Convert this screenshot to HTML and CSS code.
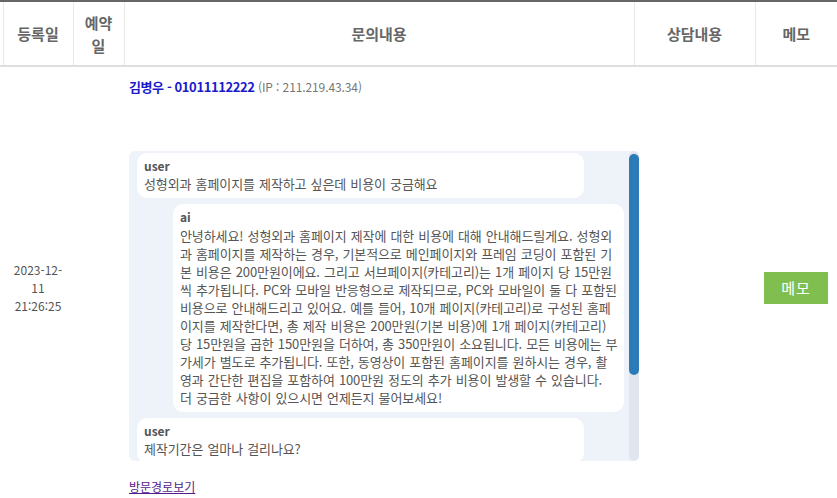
FILE: index.html
```html
<!DOCTYPE html>
<html lang="ko">
<head>
    <meta charset="UTF-8">
    <meta name="viewport" content="width=device-width, initial-scale=1.0">
    <title>상담 문의 목록</title>
    <link rel="stylesheet" href="styles.css">
</head>
<body>
    <table class="list">
        <colgroup>
            <col class="c-chk">
            <col class="c-date">
            <col class="c-resv">
            <col class="c-ask">
            <col class="c-answer">
            <col class="c-memo">
        </colgroup>
        <thead>
            <tr>
                <th></th>
                <th>등록일</th>
                <th>예약일</th>
                <th>문의내용</th>
                <th>상담내용</th>
                <th>메모</th>
            </tr>
        </thead>
        <tbody>
            <tr>
                <td></td>
                <td class="date">2023-12-<br>11<br>21:26:25</td>
                <td></td>
                <td class="ask">
                    <div class="info">
                        <span class="name">김병우 - 01011112222</span>
                        <span class="ip">(IP : 211.219.43.34)</span>
                    </div>

                    <div class="chat-wrap">
                        <div class="chat">
                            <div class="msg user">
                                <div class="who">user</div>
                                성형외과 홈페이지를 제작하고 싶은데 비용이 궁금해요
                            </div>
                            <div class="msg ai">
                                <div class="who">ai</div>
                                안녕하세요! 성형외과 홈페이지 제작에 대한 비용에 대해 안내해드릴게요. 성형외<br>과 홈페이지를 제작하는 경우, 기본적으로 메인페이지와 프레임 코딩이 포함된 기<br>본 비용은 200만원이에요. 그리고 서브페이지(카테고리)는 1개 페이지 당 15만원<br>씩 추가됩니다. PC와 모바일 반응형으로 제작되므로, PC와 모바일이 둘 다 포함된<br>비용으로 안내해드리고 있어요. 예를 들어, 10개 페이지(카테고리)로 구성된 홈페<br>이지를 제작한다면, 총 제작 비용은 200만원(기본 비용)에 1개 페이지(카테고리)<br>당 15만원을 곱한 150만원을 더하여, 총 350만원이 소요됩니다. 모든 비용에는 부<br>가세가 별도로 추가됩니다. 또한, 동영상이 포함된 홈페이지를 원하시는 경우, 촬<br>영과 간단한 편집을 포함하여 100만원 정도의 추가 비용이 발생할 수 있습니다.<br>더 궁금한 사항이 있으시면 언제든지 물어보세요!
                            </div>
                            <div class="msg user">
                                <div class="who">user</div>
                                제작기간은 얼마나 걸리나요?
                            </div>
                        </div>
                        <!-- 스크롤바 -->
                        <div class="scroll-track"><div class="scroll-thumb"></div></div>
                    </div>

                    <a href="#" class="visit">방문경로보기</a>
                </td>
                <td></td>
                <td class="memo">
                    <button type="button" class="btn-memo">메모</button>
                </td>
            </tr>
        </tbody>
    </table>
</body>
</html>
```

FILE: styles.css
```css
body{
    margin: 0;
    font-family: "Noto Sans CJK KR", "Noto Sans", sans-serif;
    color: #555;
}

.list{
    width: 837px;
    border-collapse: collapse;
    table-layout: fixed;
    border-top: 2px solid #666;
}

.c-chk{ width: 3px; }
.c-date{ width: 70px; }
.c-resv{ width: 51px; }
.c-ask{ width: 510px; }
.c-answer{ width: 121px; }
.c-memo{ width: 82px; }

.list th{
    height: 63px;
    padding: 0 6px;
    border-bottom: 2px solid #dedede;
    border-left: 1px solid #e8e8e8;
    font-size: 15px;
    font-weight: bold;
    line-height: 23px;
    color: #666;
}

.list th:first-child{
    border-left: none;
    padding: 0;
}

.list td{
    padding: 0;
    vertical-align: middle;
    font-size: 12px;
}

.date{
    text-align: center;
    line-height: 18px;
    color: #555;
}

.ask{
    padding: 10px 5px 13px 5px !important;
    vertical-align: top !important;
    text-align: left;
}

.info{
    line-height: 20px;
    margin-bottom: 54px;
}

.name{
    color: #1a1acc;
    font-size: 13px;
    font-weight: bold;
    letter-spacing: -0.4px;
}

.ip{
    color: #777;
    font-size: 12px;
    letter-spacing: -0.1px;
}

.chat-wrap{
    position: relative;
    width: 510px;
    height: 310px;
}

.chat{
    box-sizing: border-box;
    height: 100%;
    padding: 2px 15px 0 8px;
    overflow: hidden;
    background-color: #eef3fa;
    border-radius: 6px;
}

.scroll-track{
    position: absolute;
    top: 0;
    right: 0;
    bottom: 0;
    width: 10px;
    background-color: #e1e6ee;
    border-radius: 5px;
}

.scroll-thumb{
    margin-top: 3px;
    height: 221px;
    background-color: #2a7bb8;
    border-radius: 5px;
}

.msg{
    background-color: #fff;
    border-radius: 10px;
    padding: 4px 7px 5px;
    margin-bottom: 6px;
    font-size: 13px;
    line-height: 18px;
    letter-spacing: -0.1px;
    word-spacing: 0.6px;
    color: #555;
    white-space: nowrap;
}

.msg.user{
    margin-right: 40px;
}

.msg.ai{
    margin-left: 36px;
}

.who{
    font-size: 12px;
    font-weight: bold;
    letter-spacing: 0;
    margin-bottom: 1px;
}

.user .who{
    margin-bottom: 0;
}

.visit{
    display: inline-block;
    margin-top: 17px;
    font-size: 12px;
    line-height: 18px;
    color: #551a8b;
}

.memo{
    text-align: center;
}

.btn-memo{
    width: 64px;
    height: 32px;
    padding: 0;
    border: none;
    background-color: #80bf4f;
    color: #fff;
    font-family: inherit;
    font-size: 15px;
    line-height: 32px;
    letter-spacing: 1px;
    cursor: pointer;
}
```
